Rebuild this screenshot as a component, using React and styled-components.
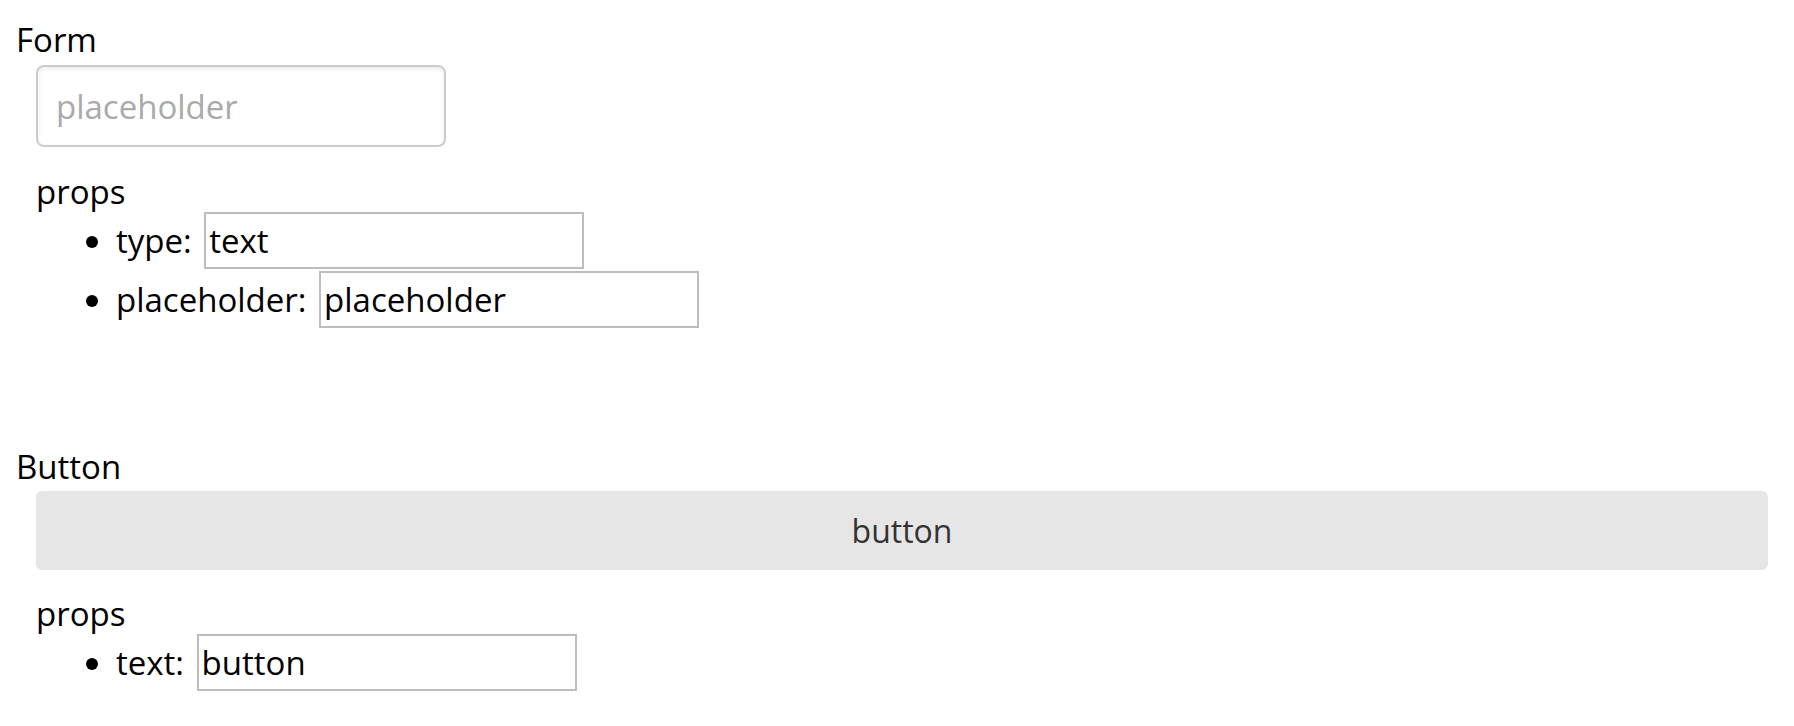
import React from 'react';
import styled, {createGlobalStyle} from 'styled-components';

const GlobalStyle = createGlobalStyle`
  html, body {
    margin: 0;
    padding: 0;
    background: #fff;
  }
  body {
    font-family: 'Open Sans', 'Liberation Sans', sans-serif;
    color: #000;
  }
`;

const sections = [
  {
    name: 'Form',
    props: [
      {key: 'type', value: 'text'},
      {key: 'placeholder', value: 'placeholder'},
    ],
  },
  {
    name: 'Button',
    props: [{key: 'text', value: 'button'}],
  },
];

function App() {
  return (
    <Page>
      <GlobalStyle />
      {sections.map((section) => (
        <Section key={section.name}>
          <Title>{section.name}</Title>
          <SectionBody>
            {section.name === 'Form' ? (
              <PreviewInput type='text' placeholder='placeholder' />
            ) : (
              <PreviewButton type='button'>button</PreviewButton>
            )}
            <PropsLabel>props</PropsLabel>
            <PropList>
              {section.props.map((prop) => (
                <PropItem key={prop.key}>
                  {prop.key}:{' '}
                  <PropInput type='text' defaultValue={prop.value} />
                </PropItem>
              ))}
            </PropList>
          </SectionBody>
        </Section>
      ))}
    </Page>
  );
}

export default App;

const Page = styled.div`
  padding: 16px;
  display: flex;
  flex-direction: column;
  gap: 114px;
`;

const Section = styled.section`
  display: block;
`;

const Title = styled.div`
  font-size: 33px;
  line-height: 48px;
`;

const SectionBody = styled.div`
  margin: 0 10px 0 20px;
`;

const PreviewInput = styled.input`
  display: block;
  box-sizing: border-box;
  margin-top: 1px;
  width: 410px;
  height: 82px;
  padding: 0 18px;
  border: 2px solid #cccccc;
  border-radius: 8px;
  box-shadow: inset 0 2px 4px rgba(0, 0, 0, 0.08);
  font-family: inherit;
  font-size: 33px;
  color: #000;
  outline: none;
  &::placeholder {
    color: #aaaaaa;
  }
`;

const PreviewButton = styled.button`
  display: block;
  box-sizing: border-box;
  width: 100%;
  height: 79px;
  border: none;
  border-radius: 6px;
  background-color: #e6e6e6;
  color: #333333;
  font-family: inherit;
  font-size: 32px;
  padding: 0;
  cursor: pointer;
`;

const PropsLabel = styled.div`
  margin-top: 25px;
  font-size: 33px;
  line-height: 40px;
  ${PreviewButton} + & {
    margin-top: 24px;
  }
`;

const PropList = styled.ul`
  margin: 0;
  padding-left: 80px;
  list-style: disc;
`;

const PropItem = styled.li`
  font-size: 33px;
  line-height: 58px;
  height: 58.5px;
`;

const PropInput = styled.input`
  box-sizing: border-box;
  vertical-align: top;
  margin: 0 0 0 4px;
  width: 380px;
  height: 57px;
  padding: 0 3px;
  border: 2px solid #bdbdbd;
  border-radius: 0;
  font-family: inherit;
  font-size: 33px;
  color: #000;
  outline: none;
`;
